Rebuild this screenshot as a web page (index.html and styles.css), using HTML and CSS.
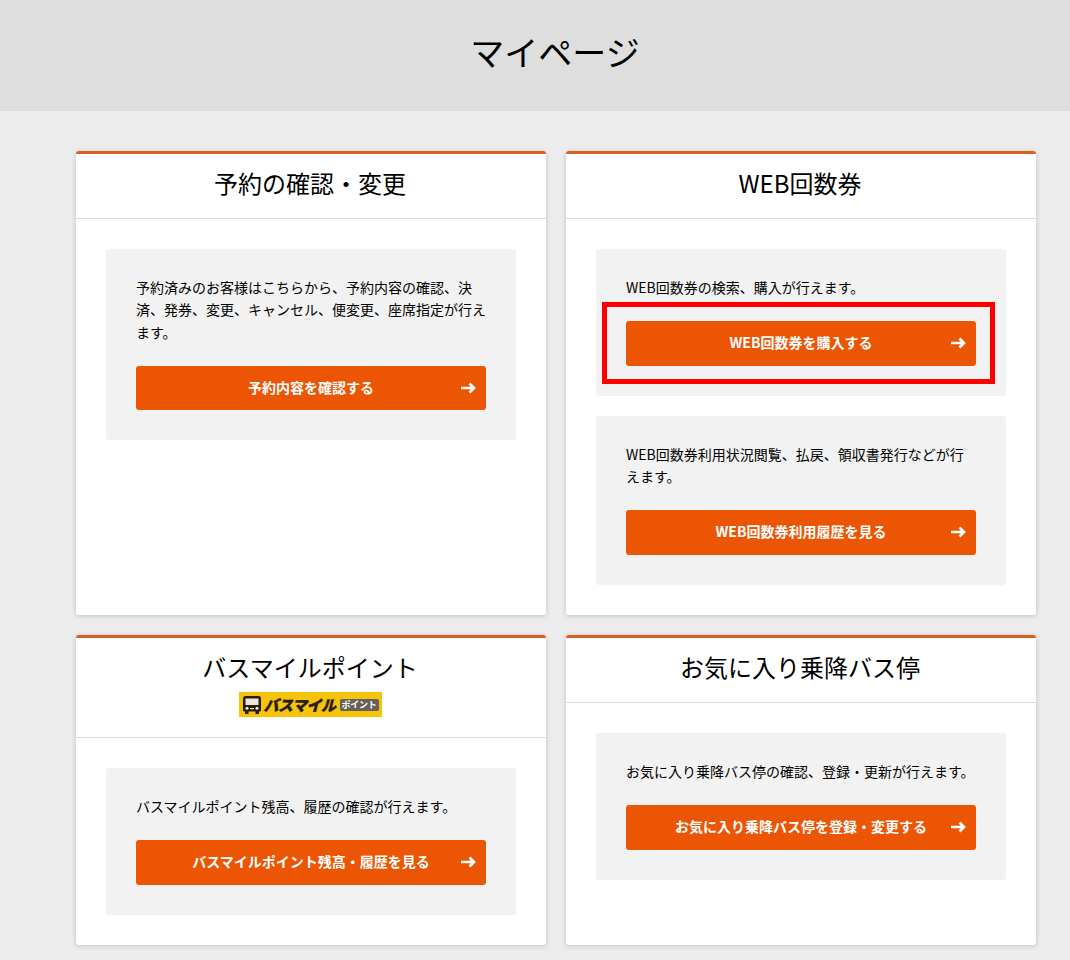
FILE: index.html
```html
<!DOCTYPE html>
<html lang="ja">
<head>
    <meta charset="UTF-8">
    <meta name="viewport" content="width=device-width, initial-scale=1.0">
    <title>マイページ</title>
    <link rel="stylesheet" href="styles.css">
</head>
<body>
    <div class="page-title">
        <h1>マイページ</h1>
    </div>
    <div class="cards">
        <div class="card">
            <div class="card-head">
                <h2>予約の確認・変更</h2>
            </div>
            <div class="card-body">
                <div class="panel">
                    <p>予約済みのお客様はこちらから、予約内容の確認、決済、発券、変更、キャンセル、便変更、座席指定が行えます。</p>
                    <a class="btn" href="#">
                        <span class="btn-label">予約内容を確認する</span>
                        <svg class="arrow" viewBox="0 0 16 12"><path d="M1 6H14M9.500 1.500L14 6L9.500 10.500"/></svg>
                    </a>
                </div>
            </div>
        </div>
        <div class="card">
            <div class="card-head">
                <h2>WEB回数券</h2>
            </div>
            <div class="card-body">
                <div class="panel">
                    <p>WEB回数券の検索、購入が行えます。</p>
                    <a class="btn btn-marked" href="#">
                        <span class="btn-label">WEB回数券を購入する</span>
                        <svg class="arrow" viewBox="0 0 16 12"><path d="M1 6H14M9.500 1.500L14 6L9.500 10.500"/></svg>
                    </a>
                </div>
                <div class="panel">
                    <p>WEB回数券利用状況閲覧、払戻、領収書発行などが行えます。</p>
                    <a class="btn" href="#">
                        <span class="btn-label">WEB回数券利用履歴を見る</span>
                        <svg class="arrow" viewBox="0 0 16 12"><path d="M1 6H14M9.500 1.500L14 6L9.500 10.500"/></svg>
                    </a>
                </div>
            </div>
        </div>
        <div class="card">
            <div class="card-head">
                <h2>バスマイルポイント</h2>
                <div class="logo">
                    <svg class="logo-bus" viewBox="0 0 18 18">
                        <path d="M2.500 0H15.500Q18 0 18 2.500V14Q18 15.500 16 15.500H2Q0 15.500 0 14V2.500Q0 0 2.500 0Z" fill="#2a1c08"/>
                        <path d="M2.500 2.500H15.500V9H2.500Z" fill="#e9e6dc"/>
                        <rect x="2" y="15" width="3.500" height="3" fill="#2a1c08"/>
                        <rect x="12.500" y="15" width="3.500" height="3" fill="#2a1c08"/>
                        <circle cx="4" cy="12.200" r="1.500" fill="#f4f1e6"/>
                        <circle cx="14" cy="12.200" r="1.500" fill="#f4f1e6"/>
                        <rect x="7" y="12" width="4" height="1.200" fill="#f4f1e6"/>
                    </svg>
                    <span class="logo-name">バスマイル</span>
                    <span class="logo-point">ポイント</span>
                </div>
            </div>
            <div class="card-body">
                <div class="panel">
                    <p>バスマイルポイント残高、履歴の確認が行えます。</p>
                    <a class="btn" href="#">
                        <span class="btn-label">バスマイルポイント残高・履歴を見る</span>
                        <svg class="arrow" viewBox="0 0 16 12"><path d="M1 6H14M9.500 1.500L14 6L9.500 10.500"/></svg>
                    </a>
                </div>
            </div>
        </div>
        <div class="card">
            <div class="card-head">
                <h2>お気に入り乗降バス停</h2>
            </div>
            <div class="card-body">
                <div class="panel">
                    <p>お気に入り乗降バス停の確認、登録・更新が行えます。</p>
                    <a class="btn" href="#">
                        <span class="btn-label">お気に入り乗降バス停を登録・変更する</span>
                        <svg class="arrow" viewBox="0 0 16 12"><path d="M1 6H14M9.500 1.500L14 6L9.500 10.500"/></svg>
                    </a>
                </div>
            </div>
        </div>
    </div>
</body>
</html>
```

FILE: styles.css
```css
body {
    margin: 0;
    background-color: #ececec;
    color: #000;
    font-family: "Noto Sans CJK JP", "Noto Sans", sans-serif;
    font-size: 14px;
    line-height: 1.6;
}
.page-title {
    height: 111px;
    padding-left: 40px;
    background-color: #dedede;
    display: flex;
    justify-content: center;
    align-items: center;
}
.page-title h1 {
    margin: 0 0 6px 0;
    font-size: 34px;
    font-weight: 400;
}
.cards {
    display: grid;
    grid-template-columns: 470px 470px;
    gap: 20.600px 20px;
    padding: 40px 34px 15px 76px;
}
.card {
    background-color: #fff;
    border-top: 3px solid #d9601f;
    border-radius: 3px;
    box-shadow: 0 1px 5px rgba(0, 0, 0, 0.18);
}
.card-head {
    padding: 9.600px 12px 16px 10px;
    border-bottom: 1px solid #dddddd;
    text-align: center;
}
.card-head h2 {
    margin: 0;
    font-size: 24px;
    font-weight: 400;
}
.card-body {
    padding: 30px;
    display: flex;
    flex-direction: column;
    gap: 20px;
}
.panel {
    background-color: #f2f2f2;
    border-radius: 3px;
    padding: 27px 30px 30px;
}
.panel p {
    margin: 0 0 22.600px 0;
}
.btn {
    position: relative;
    display: grid;
    grid-template-columns: 1fr auto 1fr;
    align-items: center;
    padding: 10px 10px 12.200px;
    background-color: #ec5504;
    border-radius: 3px;
    color: #fff;
    font-weight: 700;
    text-decoration: none;
}
.btn-label {
    grid-column: 2;
}
.arrow {
    grid-column: 3;
    justify-self: end;
    width: 16px;
    height: 12px;
    margin-top: 2px;
    fill: none;
    stroke: #fff;
    stroke-width: 2.600;
}
/* red annotation frame over the first ticket button */
.btn-marked::after {
    content: "";
    position: absolute;
    top: -19px;
    left: -24px;
    right: -19px;
    bottom: -18px;
    border: 5px solid #ff0000;
    pointer-events: none;
}
.logo {
    display: flex;
    align-items: center;
    width: 143px;
    height: 25px;
    margin: 6px auto 4px;
    padding: 0 3px 0 4px;
    box-sizing: border-box;
    background-color: #f5c30a;
    line-height: 1;
}
.logo-bus {
    width: 18px;
    height: 18px;
    flex: none;
}
.logo-name {
    margin-left: 3px;
    font-size: 15px;
    font-weight: 900;
    font-style: italic;
    color: #2a1c08;
    letter-spacing: -0.500px;
    -webkit-text-stroke: 0.400px #2a1c08;
    white-space: nowrap;
}
.logo-point {
    margin-left: auto;
    width: 39px;
    height: 12px;
    background-color: #66625a;
    border-radius: 2px;
    color: #fff;
    font-size: 9px;
    font-weight: 700;
    line-height: 12px;
    text-align: center;
    letter-spacing: -0.300px;
    white-space: nowrap;
}
```
